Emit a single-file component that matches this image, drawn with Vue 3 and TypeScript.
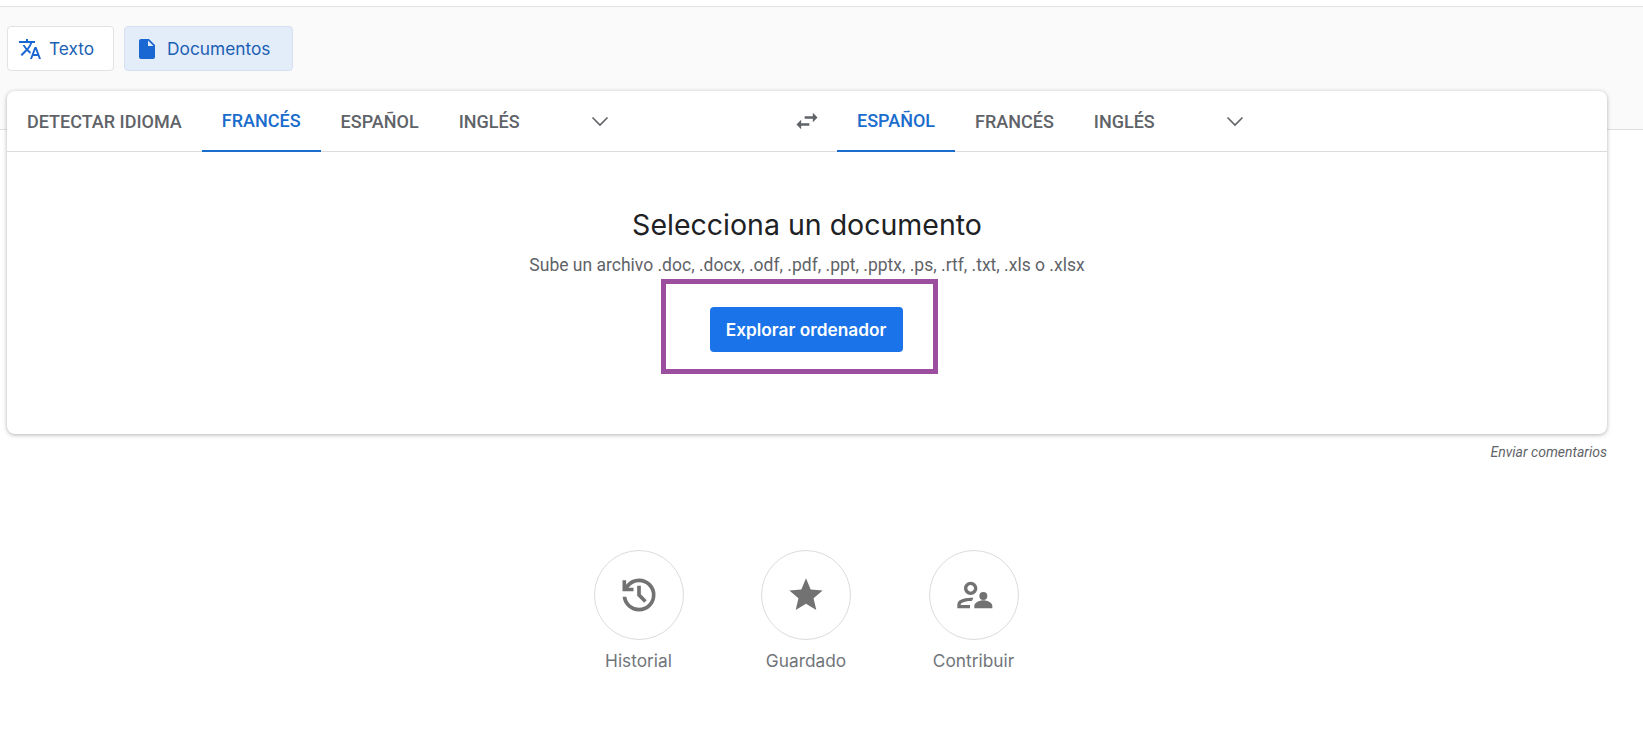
<script setup lang="ts">
interface Shortcut {
  label: string;
  size: number;
  paths: string[];
}

const sourceTabs = ["DETECTAR IDIOMA", "FRANCÉS", "ESPAÑOL", "INGLÉS"];
const targetTabs = ["ESPAÑOL", "FRANCÉS", "INGLÉS"];

const shortcuts: Shortcut[] = [
  {
    label: "Historial",
    size: 44,
    paths: [
      "M12 21q-3.45 0-6.012-2.288T3.05 13H5.1q.35 2.6 2.313 4.3T12 19q2.925 0 4.963-2.037T19 12q0-2.925-2.037-4.963T12 5q-1.725 0-3.225.8T6.25 8H9v2H3V4h2v2.35q1.275-1.6 3.113-2.475T12 3q3.75 0 6.375 2.625T21 12q0 3.75-2.625 6.375T12 21Zm2.8-4.8L11 12.4V7h2v4.6l3.2 3.2-1.4 1.4Z",
    ],
  },
  {
    label: "Guardado",
    size: 40,
    paths: ["M12 17.27L18.18 21l-1.64-7.03L22 9.24l-7.19-.61L12 2 9.19 8.63 2 9.24l5.46 4.73L5.82 21z"],
  },
  {
    label: "Contribuir",
    size: 40,
    paths: [
      "M10 12c2.2 0 4-1.8 4-4s-1.8-4-4-4-4 1.8-4 4 1.8 4 4 4zm0-6c1.1 0 2 .9 2 2s-.9 2-2 2-2-.9-2-2 .9-2 2-2z",
      "M2 20v-2.2c0-1.3.7-2.2 1.8-2.8 1.9-1 4-1.4 6.2-1.4.6 0 1.2 0 1.7.1l-1 1.9H10c-1.8 0-3.6.3-5.1 1.1-.6.3-.9.7-.9 1.1v.2h5.6v2z",
      "M17.6 10.2a2.4 2.4 0 1 1 0 4.8 2.4 2.4 0 0 1 0-4.8zM12.2 20v-1.6c0-1.9 3.5-3.2 5.4-3.2s5.4 1.3 5.4 3.2V20z",
    ],
  },
];
</script>

<template>
  <div class="page">
    <header class="band">
      <button class="mode">
        <svg class="mode-icon" viewBox="0 0 24 24">
          <path d="M12.87 15.07l-2.54-2.51.03-.03c1.74-1.94 2.98-4.17 3.71-6.53H17V4h-7V2H8v2H1v1.99h11.17C11.5 7.92 10.44 9.75 9 11.35 8.07 10.32 7.3 9.19 6.69 8h-2c.73 1.63 1.73 3.17 2.98 4.56l-5.09 5.02L4 19l5-5 3.11 3.11.76-2.04zM18.5 10h-2L12 22h2l1.12-3h4.75L21 22h2l-4.5-12zm-2.62 7l1.62-4.33L19.12 17h-3.24z" />
        </svg>
        Texto
      </button>
      <button class="mode selected">
        <svg class="mode-icon" viewBox="0 0 24 24">
          <path d="M6 2c-1.1 0-1.99.9-1.99 2L4 20c0 1.1.89 2 1.99 2H18c1.1 0 2-.9 2-2V8l-6-6H6zm7 7V3.5L18.5 9H13z" />
        </svg>
        Documentos
      </button>
    </header>

    <section class="card">
      <div class="card-head">
        <div class="lang-pane">
          <span
            v-for="(tab, i) in sourceTabs"
            :key="tab"
            class="tab"
            :class="{ active: i === 1 }"
          >{{ tab }}</span>
          <svg class="chevron" viewBox="0 0 24 24">
            <path d="M4.5 8.5L12 16l7.5-7.5" />
          </svg>
        </div>
        <div class="swap">
          <svg viewBox="0 0 24 24">
            <path d="M6.99 11L3 15l3.99 4v-3H14v-2H6.99v-3zM21 9l-3.99-4v3H10v2h7.01v3L21 9z" />
          </svg>
        </div>
        <div class="lang-pane">
          <span
            v-for="(tab, i) in targetTabs"
            :key="tab"
            class="tab"
            :class="{ active: i === 0 }"
          >{{ tab }}</span>
          <svg class="chevron" viewBox="0 0 24 24">
            <path d="M4.5 8.5L12 16l7.5-7.5" />
          </svg>
        </div>
      </div>

      <div class="card-body">
        <h1 class="title">Selecciona un documento</h1>
        <p class="hint">Sube un archivo .doc, .docx, .odf, .pdf, .ppt, .pptx, .ps, .rtf, .txt, .xls o .xlsx</p>
        <div class="action">
          <button class="browse">Explorar ordenador</button>
          <!-- purple annotation drawn over the screenshot -->
          <div class="highlight"></div>
        </div>
      </div>
    </section>

    <div class="feedback"><span>Enviar comentarios</span></div>

    <nav class="shortcuts">
      <div v-for="item in shortcuts" :key="item.label" class="shortcut">
        <div class="circle">
          <svg :width="item.size" :height="item.size" viewBox="0 0 24 24">
            <path v-for="d in item.paths" :key="d" :d="d" />
          </svg>
        </div>
        <span class="shortcut-label">{{ item.label }}</span>
      </div>
    </nav>
  </div>
</template>

<style>
html,
body {
  margin: 0;
  background: #fff;
}
</style>

<style scoped>
.page {
  height: 747px;
  overflow: hidden;
  background: #fff;
  font-family: Roboto, "Liberation Sans", sans-serif;
}

.band {
  display: flex;
  gap: 10px;
  height: 124px;
  margin-top: 6px;
  padding: 19px 0 0 7px;
  box-sizing: border-box;
  background: #fafafa;
  border-top: 1px solid #e4e4e4;
  border-bottom: 1px solid #e0e0e0;
}

.mode {
  display: flex;
  align-items: center;
  gap: 7px;
  height: 45px;
  padding: 0 19px 0 10px;
  box-sizing: border-box;
  background: #fff;
  border: 1px solid #e0e2e6;
  border-radius: 4px;
  color: #1a5fb4;
  font-family: Inter, sans-serif;
  font-size: 17.3px;
}

.mode.selected {
  background: #e3ecf9;
  border-color: #d6e0f0;
  gap: 8px;
  padding-right: 22px;
}

.mode-icon {
  width: 24px;
  height: 24px;
  fill: #1967d2;
}

.card {
  position: relative;
  width: 1600px;
  height: 343px;
  margin: -39px 0 0 7px;
  box-sizing: border-box;
  background: #fff;
  border-radius: 8px;
  box-shadow: 0 1px 4px 0 rgba(60, 64, 67, 0.4);
}

.card-head {
  display: flex;
  height: 61px;
  border-bottom: 1px solid #dadce0;
  box-sizing: border-box;
}

.lang-pane {
  flex: 1;
  display: flex;
  min-width: 0;
}

.swap {
  width: 60px;
  display: flex;
  align-items: center;
  justify-content: center;
}

.swap svg {
  width: 28px;
  height: 28px;
  fill: #5f6368;
}

.tab {
  display: flex;
  align-items: center;
  height: 61px;
  padding: 0 20px;
  box-sizing: border-box;
  color: #5f6368;
  font-size: 18px;
  font-weight: 500;
  white-space: nowrap;
}

.tab.active {
  color: #1a6dcc;
  border-bottom: 2px solid #1a6dcc;
}

.chevron {
  width: 24px;
  height: 24px;
  margin-left: 48px;
  align-self: center;
  fill: none;
  stroke: #5f6368;
  stroke-width: 1.6;
}

.card-body {
  display: flex;
  flex-direction: column;
  align-items: center;
  padding-top: 55px;
}

.title {
  margin: 0;
  font-family: Inter, sans-serif;
  font-size: 28.5px;
  line-height: 36px;
  font-weight: 400;
  color: #202124;
}

.hint {
  margin: 10px 0 0;
  font-size: 17.5px;
  line-height: 24px;
  color: #5f6368;
}

.action {
  position: relative;
  margin: 30px 2px 0 0;
}

.browse {
  display: block;
  width: 193px;
  height: 45px;
  padding: 0;
  background: #1a73e8;
  border: 0;
  border-radius: 4px;
  color: #fff;
  font-family: Inter, sans-serif;
  font-size: 17.3px;
  font-weight: 600;
}

.highlight {
  position: absolute;
  left: -49px;
  top: -28px;
  width: 277px;
  height: 95px;
  box-sizing: border-box;
  border: 5px solid #9c4f9e;
}

.feedback {
  display: flex;
  justify-content: flex-end;
  width: 1607px;
  margin-top: 10px;
  font-size: 14px;
  line-height: 16px;
  font-style: italic;
  color: #5f6368;
}

.shortcuts {
  display: flex;
  justify-content: center;
  gap: 77.5px;
  width: 1598px;
  margin: 90px 0 0 7px;
}

.shortcut {
  width: 90px;
  display: flex;
  flex-direction: column;
  align-items: center;
}

.circle {
  width: 90px;
  height: 90px;
  box-sizing: border-box;
  display: flex;
  align-items: center;
  justify-content: center;
  border: 1px solid #dadce0;
  border-radius: 50%;
}

.circle svg {
  fill: #727272;
}

.shortcut-label {
  margin-top: 11px;
  font-family: Inter, sans-serif;
  font-size: 17.3px;
  line-height: 20px;
  color: #70757a;
  white-space: nowrap;
}
</style>
